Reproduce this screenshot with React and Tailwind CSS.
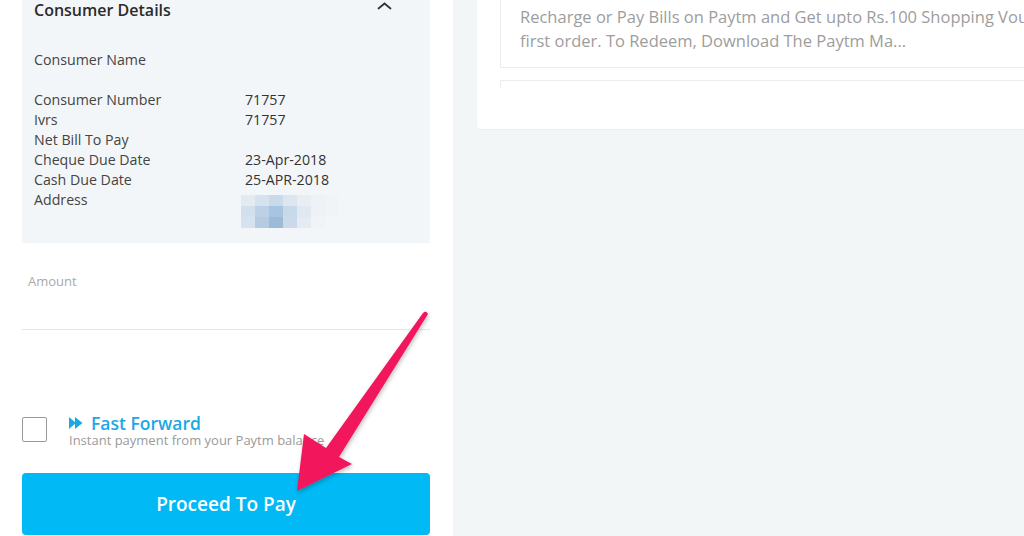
const blur = [
  ["bg-[#e3ebf2]", "bg-[#d6e2ee]", "bg-[#c9dbeb]", "bg-[#dde6ef]", "bg-[#e8eef4]", "bg-[#eef2f6]", "bg-[#f1f4f7]"],
  ["bg-[#d2dfec]", "bg-[#bcd1e6]", "bg-[#a7c4e0]", "bg-[#c8d9ea]", "bg-[#e0e8f1]", "bg-[#eef2f6]", "bg-[#f1f4f7]"],
  ["bg-[#d6e2ee]", "bg-[#b4cbe2]", "bg-[#9dbbd9]", "bg-[#cbd9e8]", "bg-[#e4ebf2]", "bg-[#f1f4f7]", "bg-[#f3f6f8]"],
];

const rows = [
  ["Consumer Number", "71757"],
  ["Ivrs", "71757"],
  ["Net Bill To Pay", ""],
  ["Cheque Due Date", "23-Apr-2018"],
  ["Cash Due Date", "25-APR-2018"],
];

function ConsumerDetails() {
  return (
    <div className="h-[243px] bg-[#f3f6f8] px-3">
      <div className="flex items-center justify-between h-[20px]">
        <span className="text-[16px] leading-[20px] font-semibold text-[#2b2b2b]">Consumer Details</span>
        <svg className="w-[15px] h-[8px] mr-[26px] -mt-[9px]" viewBox="0 0 15 8" fill="none" stroke="#333" strokeWidth="1.8" strokeLinecap="round">
          <path d="M1.5 6.5 L7.5 1.5 L13.5 6.5" />
        </svg>
      </div>

      <div className="mt-[30px] text-[14.2px] leading-[20px] text-[#444]">Consumer Name</div>

      <div className="mt-[20px] text-[14.2px] leading-[20px]">
        {rows.map(([label, value]) => (
          <div key={label} className="flex">
            <span className="w-[211px] text-[#444]">{label}</span>
            <span className="text-[#333]">{value}</span>
          </div>
        ))}
        <div className="flex">
          <span className="w-[207px] text-[#444]">Address</span>
          <div className="mt-[5px] flex flex-col">
            {blur.map((r, i) => (
              <div key={i} className="flex">
                {r.map((c, j) => (
                  <div key={j} className={`w-[14px] h-[11px] ${c}`} />
                ))}
              </div>
            ))}
          </div>
        </div>
      </div>
    </div>
  );
}

function Arrow() {
  return (
    <svg className="absolute left-0 top-0 w-[1024px] h-[536px] pointer-events-none" viewBox="0 0 1024 536">
      <defs>
        <filter id="sh" x="-20%" y="-20%" width="140%" height="140%">
          <feDropShadow dx="1" dy="2" stdDeviation="2" floodColor="#000" floodOpacity="0.25" />
        </filter>
      </defs>
      <path
        d="M297 491 L304 434 L326 448 L423 313 Q426 310 428 314 L339 457 L352 464 Z"
        fill="#f2165b"
        filter="url(#sh)"
      />
    </svg>
  );
}

export default function App() {
  return (
    <div
      className="relative flex w-[1024px] h-[536px] overflow-hidden bg-[#f3f6f7]"
      style={{ fontFamily: '"Open Sans", "Noto Sans", sans-serif' }}
    >
      {/* Left panel */}
      <div className="w-[453px] shrink-0 bg-white px-[22px] pr-[23px]">
        <ConsumerDetails />

        <div className="border-b border-[#e6e6e6]">
          <div className="mt-[30px] pl-[6px] text-[13px] leading-[16px] text-[#aaa]">Amount</div>
          <div className="h-[40px]" />
        </div>

        <div className="mt-[87px] flex items-start">
          <div className="w-[25px] h-[25px] border border-[#9a9a9a] rounded-[2px] shrink-0" />
          <div className="ml-[22px] -mt-[5px]">
            <div className="flex items-center">
              <svg className="w-[14px] h-[12px]" viewBox="0 0 14 12" fill="#1ca8e4">
                <path d="M0 0 L7 6 L0 12 Z" />
                <path d="M6 0 L13.5 6 L6 12 Z" />
              </svg>
              <span className="ml-[8px] text-[17.5px] leading-[22px] font-semibold text-[#1ca8e4]">Fast Forward</span>
            </div>
            <div className="-mt-[3px] text-[13px] leading-[18px] text-[#9a9a9a]">
              Instant payment from your Paytm balance
            </div>
          </div>
        </div>

        <button className="mt-[24px] w-full h-[62px] rounded-[4px] bg-[#00b9f5] text-white text-[19px] font-semibold">
          Proceed To Pay
        </button>
      </div>

      {/* Right panel */}
      <div className="flex-1 pl-[24px]">
        <div className="h-[130px] bg-white rounded-bl-[3px] shadow-[0_1px_2px_rgba(0,0,0,0.04)] pl-[23px]">
          <div className="h-[69px] -mt-px border border-r-0 border-[#ececec] pl-[19px] pt-[5px] text-[16.5px] leading-[24px] text-[#9d9d9d] whitespace-nowrap overflow-hidden">
            <div>Recharge or Pay Bills on Paytm and Get upto Rs.100 Shopping Voucher on your</div>
            <div>first order. To Redeem, Download The Paytm Ma...</div>
          </div>
          <div className="mt-[12px] h-[8px] border-t border-l border-[#ececec]" />
        </div>
      </div>

      <Arrow />
    </div>
  );
}
